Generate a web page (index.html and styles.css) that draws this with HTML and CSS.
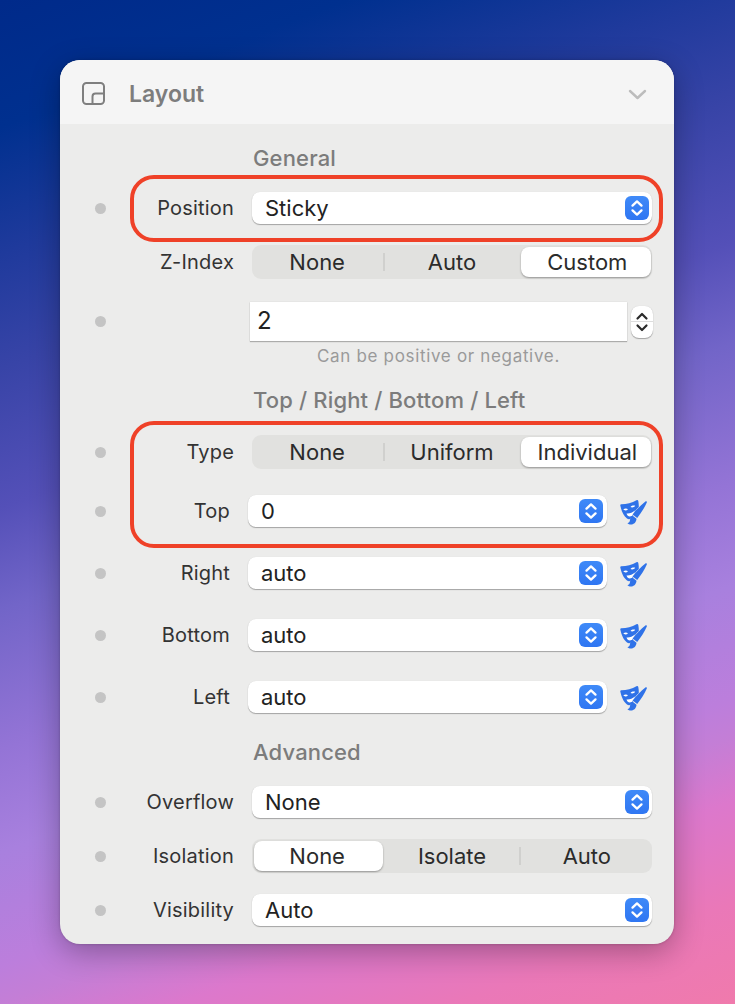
FILE: index.html
```html
<!DOCTYPE html>
<html lang="en">
<head>
    <meta charset="UTF-8">
    <meta name="viewport" content="width=device-width, initial-scale=1.0">
    <title>Layout</title>
    <link rel="stylesheet" href="styles.css">
</head>
<body>
    <svg class="defs" width="0" height="0" aria-hidden="true">
        <symbol id="updown" viewBox="0 0 24 24">
            <path d="M7.500 9.600 12 5.400l4.500 4.200M7.500 14.400 12 18.600l4.500-4.200" fill="none" stroke="#fff" stroke-width="2.300" stroke-linecap="round" stroke-linejoin="round"/>
        </symbol>
        <symbol id="mask" viewBox="0 0 28 28">
            <path fill="#2f72e8" d="M2.500 7.200C7.500 7.200 13 5.600 17.500 3.200c.9-.4 1.600 0 1.800.9.400 2 .6 4.500.5 6.500L12.500 21c-1.500 1.500-3 1.600-4.500.5C4.500 19 2.500 14 1.300 8.600 1.100 7.800 1.600 7.200 2.500 7.200z"/>
            <path fill="#fff" d="M4.200 12.600c1.400-1.200 3.400-1.300 4.800-.4-1.200 1.500-3.400 1.600-4.800.4zM11.500 10c1.200-1.400 3.200-1.800 4.700-1.200-1 1.600-3.200 2.200-4.700 1.200zM7.500 16.500c3 .3 6-.8 8.300-3 0 3-2.500 6-5 6-1.500 0-2.700-1.200-3.300-3z"/>
            <path fill="#2f72e8" stroke="#ececeb" stroke-width="1" paint-order="stroke" d="M26.400 4.400c1-.7 1.900.1 1.400 1.100C25.500 10.800 22 16.200 18.200 21l-4.600-3.600C17.500 12.500 22 8 26.400 4.400z"/>
            <path fill="#2f72e8" d="M13.700 18.700l3.800 3c-.2 3.300-2.500 5.800-5.500 5.800-1.500 0-2.700-.5-3.600-1.300 1.600-.4 2.200-1.200 2.500-2.600.4-2.300 1-4.100 2.800-4.900z"/>
        </symbol>
    </svg>

    <div class="panel">
        <!-- Header -->
        <div class="panel-header">
            <svg class="layout-icon" width="25" height="25" viewBox="0 0 25 25">
                <rect x="2" y="2" width="21" height="21" rx="3.500" fill="none" stroke="#7f7f7f" stroke-width="2"/>
                <path d="M11.500 23v-7.500a3 3 0 0 1 3-3H23" fill="none" stroke="#7f7f7f" stroke-width="2"/>
            </svg>
            <span class="panel-title">Layout</span>
            <svg class="chevron" width="19" height="11" viewBox="0 0 19 11">
                <path d="M2 2l7.500 7L17 2" fill="none" stroke="#bcbcbc" stroke-width="2.400" stroke-linecap="round" stroke-linejoin="round"/>
            </svg>
        </div>

        <div class="panel-body">
            <h3 class="section">General</h3>

            <!-- Position -->
            <div class="highlight mt-21">
                <div class="row h-32">
                    <span class="dot"></span>
                    <label>Position</label>
                    <div class="select">Sticky<span class="stepper"><svg width="24" height="24"><use href="#updown"/></svg></span></div>
                </div>
            </div>

            <div class="row h-34 mt-21">
                <span></span>
                <label>Z-Index</label>
                <div class="segments">
                    <span>None</span>
                    <i class="sep"></i>
                    <span>Auto</span>
                    <span class="on">Custom</span>
                </div>
            </div>

            <div class="row h-39 mt-23">
                <span class="dot"></span>
                <label></label>
                <div class="number-wrap">
                    <div class="number">2</div>
                    <div class="arrows">
                        <svg width="22" height="32" viewBox="0 0 22 32">
                            <path d="M6.500 12.500 11 8l4.500 4.500M6.500 19.500 11 24l4.500-4.500" fill="none" stroke="#2a2a2a" stroke-width="2.200" stroke-linecap="round" stroke-linejoin="round"/>
                        </svg>
                    </div>
                </div>
            </div>
            <p class="hint">Can be positive or negative.</p>

            <h3 class="section mt-22">Top / Right / Bottom / Left</h3>

            <!-- Offsets -->
            <div class="highlight highlight-tall mt-22">
                <div class="row h-34">
                    <span class="dot"></span>
                    <label>Type</label>
                    <div class="segments">
                        <span>None</span>
                        <i class="sep"></i>
                        <span>Uniform</span>
                        <span class="on">Individual</span>
                    </div>
                </div>
                <div class="row row-side h-32 mt-26">
                    <span class="dot"></span>
                    <label>Top</label>
                    <div class="select-wrap">
                        <div class="select">0<span class="stepper"><svg width="24" height="24"><use href="#updown"/></svg></span></div>
                        <svg class="mask" width="28" height="28"><use href="#mask"/></svg>
                    </div>
                </div>
            </div>

            <div class="row row-side h-32 mt-30">
                <span class="dot"></span>
                <label>Right</label>
                <div class="select-wrap">
                    <div class="select">auto<span class="stepper"><svg width="24" height="24"><use href="#updown"/></svg></span></div>
                    <svg class="mask" width="28" height="28"><use href="#mask"/></svg>
                </div>
            </div>
            <div class="row row-side h-32 mt-30">
                <span class="dot"></span>
                <label>Bottom</label>
                <div class="select-wrap">
                    <div class="select">auto<span class="stepper"><svg width="24" height="24"><use href="#updown"/></svg></span></div>
                    <svg class="mask" width="28" height="28"><use href="#mask"/></svg>
                </div>
            </div>
            <div class="row row-side h-32 mt-30">
                <span class="dot"></span>
                <label>Left</label>
                <div class="select-wrap">
                    <div class="select">auto<span class="stepper"><svg width="24" height="24"><use href="#updown"/></svg></span></div>
                    <svg class="mask" width="28" height="28"><use href="#mask"/></svg>
                </div>
            </div>

            <h3 class="section mt-26">Advanced</h3>

            <div class="row h-32 mt-21">
                <span class="dot"></span>
                <label>Overflow</label>
                <div class="select">None<span class="stepper"><svg width="24" height="24"><use href="#updown"/></svg></span></div>
            </div>
            <div class="row h-34 mt-21">
                <span class="dot"></span>
                <label>Isolation</label>
                <div class="segments">
                    <span class="on">None</span>
                    <span>Isolate</span>
                    <i class="sep"></i>
                    <span>Auto</span>
                </div>
            </div>
            <div class="row h-32 mt-21">
                <span class="dot"></span>
                <label>Visibility</label>
                <div class="select">Auto<span class="stepper"><svg width="24" height="24"><use href="#updown"/></svg></span></div>
            </div>
        </div>
    </div>
</body>
</html>
```

FILE: styles.css
```css
html, body {
    height: 100%;
}
body {
    margin: 0;
    padding: 60px 0 0 60px;
    box-sizing: border-box;
    font-family: Inter, "Liberation Sans", sans-serif;
    color: #2b2b2b;
    overflow: hidden;
    background: linear-gradient(160deg,
        #002a8a 0%, #00308f 10%, #1f3a9c 20%, #3844a7 29%, #5450b8 40%,
        #7265c8 48%, #9474d6 59%, #a880de 67%, #bc7edc 76%, #c47ed6 79%,
        #dc78cc 84%, #ea78b8 92%, #f07aac 100%);
}
.defs {
    position: absolute;
}

.panel {
    width: 614px;
    height: 884px;
    border-radius: 20px;
    overflow: hidden;
    background-color: #ececeb;
    box-shadow: 0 8px 30px rgba(0, 0, 0, 0.3), 0 0 3px rgba(0, 0, 0, 0.2);
}
.panel-header {
    height: 64px;
    box-sizing: border-box;
    background-color: #f5f5f5;
    display: flex;
    align-items: center;
    padding: 3px 27px 0 21px;
}
.layout-icon {
    margin-right: 23px;
}
.panel-title {
    font-size: 23px;
    font-weight: 600;
    color: #7d7d7d;
    flex: 1;
}
.chevron {
    margin-top: 1px;
}

.panel-body {
    padding: 21px 22px 18px 35px;
}
.section {
    height: 26px;
    line-height: 26px;
    margin: 0 0 0 158px;
    font-size: 22px;
    font-weight: 500;
    letter-spacing: 0.15px;
    color: #7c7c7c;
}

/* Rows */
.row {
    display: grid;
    grid-template-columns: 11px 128px 1fr;
    align-items: center;
}
.row-side label {
    padding-right: 4px;
}
.h-32 { height: 32px; }
.h-34 { height: 34px; }
.h-39 { height: 39px; }
.mt-21 { margin-top: 21px; }
.mt-22 { margin-top: 22px; }
.mt-23 { margin-top: 23px; }
.mt-26 { margin-top: 26px; }
.mt-30 { margin-top: 30px; }

.dot {
    width: 11px;
    height: 11px;
    border-radius: 50%;
    background-color: #c4c4c4;
}
label {
    text-align: right;
    font-size: 20px;
    letter-spacing: 0.2px;
    color: #333;
}

/* Select */
.select {
    height: 32px;
    margin-left: 18px;
    padding: 0 3px 0 13px;
    display: flex;
    align-items: center;
    justify-content: space-between;
    background-color: #fff;
    border-radius: 8px;
    font-size: 22px;
    color: #222;
    box-shadow: 0 1px 1px rgba(0, 0, 0, 0.3), 0 0 1px rgba(0, 0, 0, 0.1);
}
.stepper {
    width: 24px;
    height: 24px;
    border-radius: 6px;
    background: linear-gradient(#3f8af8, #2f76f2);
    display: block;
}
.stepper svg {
    display: block;
}
.select-wrap {
    display: flex;
    align-items: center;
    margin-left: 14px;
}
.select-wrap .select {
    flex: 1;
    margin-left: 0;
    padding-right: 4px;
}
.mask {
    margin-left: 12px;
    margin-right: 5px;
    flex: none;
}

/* Segmented control */
.segments {
    height: 34px;
    margin-left: 18px;
    display: grid;
    grid-template-columns: 1fr 1fr 1fr;
    position: relative;
    background-color: #e1e1df;
    border-radius: 9px;
    font-size: 22px;
    color: #2b2b2b;
}
.segments span {
    display: flex;
    align-items: center;
    justify-content: center;
}
.segments span:first-child {
    padding-right: 3px;
}
.segments span:last-child {
    padding-left: 3px;
}
.segments .on {
    margin: 2px 1px 2px 2px;
    background-color: #fff;
    border-radius: 8px;
    box-shadow: 0 1px 2px rgba(0, 0, 0, 0.35);
}
.segments .on:first-child {
    margin-right: 2px;
}
.sep {
    position: absolute;
    top: 8px;
    width: 2px;
    height: 18px;
    left: 131px;
    background-color: #d0d0ce;
}
.on + span + .sep {
    left: 267px;
}

/* Number input */
.number-wrap {
    display: flex;
    align-items: center;
    margin-left: 16px;
}
.number {
    width: 377px;
    height: 39px;
    line-height: 38px;
    box-sizing: border-box;
    padding-left: 7px;
    background-color: #fff;
    font-size: 24px;
    color: #222;
    box-shadow: 0 1px 1px rgba(0, 0, 0, 0.25), 0 0 1px rgba(0, 0, 0, 0.15);
}
.arrows {
    width: 22px;
    height: 32px;
    margin-left: 4px;
    background-color: #fff;
    border-radius: 8px;
    box-shadow: 0 1px 1px rgba(0, 0, 0, 0.3), 0 0 1px rgba(0, 0, 0, 0.15);
    background-image: linear-gradient(#ddd, #ddd);
    background-size: 100% 1px;
    background-position: center;
    background-repeat: no-repeat;
}
.arrows svg {
    display: block;
}
.hint {
    margin: 6px 0 0 222px;
    height: 18px;
    line-height: 18px;
    font-size: 17px;
    letter-spacing: 0.67px;
    color: #9a9a9a;
}

/* Red outline around the highlighted rows */
.highlight {
    position: relative;
}
.highlight::after {
    content: "";
    position: absolute;
    top: -17px;
    bottom: -18px;
    left: 35px;
    right: -11px;
    border: 4px solid #ef4128;
    border-radius: 24px;
    pointer-events: none;
}
.highlight-tall::after {
    top: -14px;
    bottom: -21px;
}
```
